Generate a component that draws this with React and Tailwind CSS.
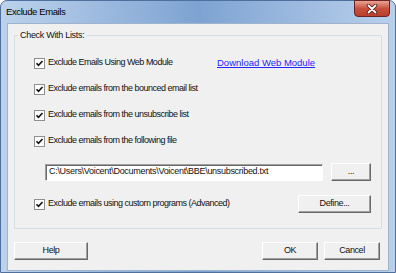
import React from 'react';

const font = { fontFamily: '"Liberation Sans", Arial, sans-serif' };

function Check() {
  return (
    <span className="w-[11px] h-[11px] shrink-0 border border-[#8e8f8f] bg-white flex items-center justify-center">
      <svg width="9" height="9" viewBox="0 0 9 9">
        <path d="M1.5 4.2 L3.5 6.3 L7.5 2" fill="none" stroke="#111" strokeWidth="1.6" />
      </svg>
    </span>
  );
}

function Btn({ children, className = '' }) {
  return (
    <button
      type="button"
      className={`h-[18px] flex items-center justify-center bg-[#f0f0f0] border border-t-white border-l-white border-r-[#696969] border-b-[#696969] shadow-[inset_-1px_-1px_0_#a0a0a0] text-[9px] tracking-[-0.4px] text-[#111] ${className}`}
    >
      {children}
    </button>
  );
}

function Row({ children, className = '' }) {
  return <div className={`h-[26px] flex items-center pl-[19px] ${className}`}>{children}</div>;
}

function Label({ children }) {
  return (
    <label className="flex items-center gap-[3px] text-[9px] tracking-[-0.5px] text-[#111] whitespace-nowrap">
      <Check />
      <span>{children}</span>
    </label>
  );
}

export default function App() {
  return (
    <div style={font} className="w-[396px] h-[273px] overflow-hidden bg-white">
      <div className="relative w-[396px] h-[273px] rounded-t-[7px] border border-[#4f6f9c] bg-gradient-to-r from-[#bcd2ec] via-[#7ea3d2] to-[#b9d0ec] flex flex-col">
        {/* title bar */}
        <div className="h-[22px] flex items-center pl-[5px] text-[9.5px] tracking-[-0.4px] text-black">Exclude Emails</div>
        <div className="absolute top-[-1px] right-[5px] w-[36px] h-[17px] rounded-b-[4px] border border-[#6b2222] bg-gradient-to-b from-[#e8a394] via-[#c9503e] to-[#b8402c] flex items-center justify-center">
          <svg width="12" height="10" viewBox="0 0 12 10">
            <path d="M2.5 1.5 L9.5 8.5 M9.5 1.5 L2.5 8.5" stroke="#4a1010" strokeWidth="3.4" strokeLinecap="round" />
            <path d="M2.5 1.5 L9.5 8.5 M9.5 1.5 L2.5 8.5" stroke="#fff" strokeWidth="1.9" strokeLinecap="round" />
          </svg>
        </div>

        {/* client area */}
        <div className="mx-[6px] h-[248px] bg-[#f0f0f0] border border-[#9fb3cd] flex flex-col">
          <fieldset className="mt-[5px] ml-[6px] w-[368px] border border-[#d5dfe5] pb-[11px]">
            <legend className="ml-[3px] px-[2px] text-[9px] tracking-[-0.3px] leading-[13px] text-[#111]">Check With Lists:</legend>
            <div className="pt-[8px]">
              <Row>
                <div className="w-[183px] flex">
                  <Label>Exclude Emails Using Web Module</Label>
                </div>
                <a href="#" className="text-[9.5px] text-[#2424ff] underline">Download Web Module</a>
              </Row>
              <Row>
                <Label>Exclude emails from the bounced email list</Label>
              </Row>
              <Row>
                <Label>Exclude emails from the unsubscribe list</Label>
              </Row>
              <Row>
                <Label>Exclude emails from the following file</Label>
              </Row>
              <div className="mt-[9px] flex items-center pl-[30px] pr-[10px]">
                <div className="w-[278px] h-[17px] flex items-center px-[3px] bg-white border border-t-[#a0a0a0] border-l-[#a0a0a0] border-r-white border-b-white shadow-[inset_1px_1px_0_#696969] text-[9px] tracking-[-0.3px] text-[#111] whitespace-nowrap overflow-hidden">
                  {"C:\\Users\\Voicent\\Documents\\Voicent\\BBE\\unsubscribed.txt"}
                </div>
                <Btn className="ml-auto w-[40px]">...</Btn>
              </div>
              <Row className="mt-[10px] pr-[10px] justify-between">
                <Label>Exclude emails using custom programs (Advanced)</Label>
                <Btn className="w-[73px]">Define...</Btn>
              </Row>
            </div>
          </fieldset>

          <div className="mt-[13px] flex items-center justify-between pl-[6px] pr-[8px]">
            <Btn className="w-[74px]">Help</Btn>
            <div className="flex gap-[6px]">
              <Btn className="w-[56px]">OK</Btn>
              <Btn className="w-[56px]">Cancel</Btn>
            </div>
          </div>
        </div>
      </div>
    </div>
  );
}
